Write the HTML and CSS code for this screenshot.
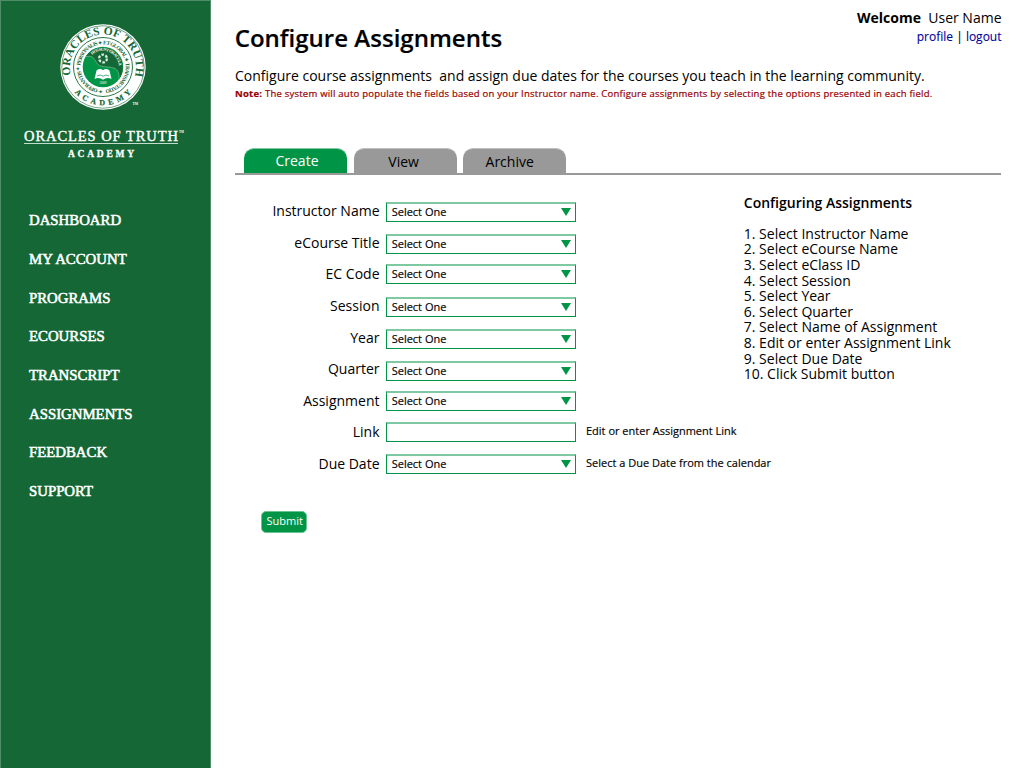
FILE: index.html
```
<!DOCTYPE html>
<html lang="en">
<head>
<meta charset="utf-8">
<title>Configure Assignments</title>
<link rel="stylesheet" href="styles.css">
</head>
<body>
<div class="app">
  <aside class="sidebar">
    <svg class="seal" width="92" height="92" viewBox="0 0 92 92">
      <defs>
        <path id="arc-name" d="M13.9 54.2A33 33 0 1 1 78.1 54.2"/>
        <path id="arc-academy" d="M17.600 71.400A38 38 0 0 0 75.400 70.500"/>
        <path id="arc-motto" d="M46 68.700A22.700 22.700 0 1 1 46.1 68.700"/>
        <path id="arc-inner" d="M35 33.800A16 16 0 0 1 61 50.500"/>
      </defs>
      <circle cx="46" cy="46" r="42.700" fill="#fff"/>
      <circle cx="46" cy="46" r="41.200" fill="none" stroke="#156735" stroke-width=".6"/>
      <circle cx="46" cy="46" r="29.500" fill="none" stroke="#156735" stroke-width=".9"/>
      <circle cx="46" cy="46" r="20.300" fill="#009447"/>
      <path d="M28.500 35.500A20.300 20.300 0 1 1 62 58.500C63 44 53 47 46 45.500C36 45 41 33 28.500 35.500Z" fill="#156735"/>
      <path d="M28.500 35.500C41 33 36 45 46 45.500C53 47 63 44 62 58.500" fill="none" stroke="#8ccba5" stroke-width=".6"/>
      <circle cx="46" cy="37.500" r="3.900" fill="none" stroke="#d9eee0" stroke-width="2.300" stroke-dasharray="2.600 1.480"/>
      <path d="M39.500 49.500Q43 46.800 46 49.200Q49 46.800 52.500 49.500L54.500 58Q50 55.800 46 58.800Q42 55.800 37.500 58Z" fill="#fff"/>
      <path d="M40 55Q43 53 46 55.200Q49 53 52 55" fill="none" stroke="#009447" stroke-width=".7"/>
      <text class="seal-name"><textPath href="#arc-name" textLength="120" lengthAdjust="spacing">ORACLES OF TRUTH</textPath></text>
      <text class="seal-academy"><textPath href="#arc-academy" textLength="64" lengthAdjust="spacing">ACADEMY</textPath></text>
      <text class="seal-motto"><textPath href="#arc-motto" textLength="140" lengthAdjust="spacing">✦ OPERANTIS ✦ PERSONALIS ✦ ET GLOBAL ✦ TRANSMUTATIO</textPath></text>
      <text class="seal-inner"><textPath href="#arc-inner" textLength="36" lengthAdjust="spacing">HOS SUNT ORACULA</textPath></text>
      <text class="seal-year" x="42.500" y="63">2009</text>
      <text class="seal-tm" x="75.500" y="84">TM</text>
    </svg>
    <svg class="wordmark" width="164" height="34" viewBox="0 0 164 34">
      <text class="wordmark-name" x="1" y="14.500" textLength="154" lengthAdjust="spacing">ORACLES OF TRUTH</text>
      <text class="wordmark-tm" x="156" y="7">TM</text>
      <path d="M1 17.500H155" stroke="#c4dccb" stroke-width="1"/>
      <text class="wordmark-sub" x="45" y="30.500" textLength="66" lengthAdjust="spacing">ACADEMY</text>
    </svg>
    <nav class="menu">
      <a>DASHBOARD</a>
      <a>MY ACCOUNT</a>
      <a>PROGRAMS</a>
      <a>ECOURSES</a>
      <a>TRANSCRIPT</a>
      <a>ASSIGNMENTS</a>
      <a>FEEDBACK</a>
      <a>SUPPORT</a>
    </nav>
  </aside>
  <main class="main">
    <header class="header">
      <h1 class="title">Configure Assignments</h1>
      <div class="user">
        <div class="welcome"><b>Welcome</b>&nbsp; User Name</div>
        <div class="links"><a>profile</a> | <a>logout</a></div>
      </div>
    </header>
    <p class="intro">Configure course assignments&nbsp; and assign due dates for the courses you teach in the learning community.</p>
    <p class="note"><b>Note:</b> The system will auto populate the fields based on your Instructor name. Configure assignments by selecting the options presented in each field.</p>
    <div class="tabs">
      <div class="tab tab-active">Create</div>
      <div class="tab">View</div>
      <div class="tab tab-archive">Archive</div>
    </div>
    <div class="content">
      <form class="form">
        <div class="row"><label>Instructor Name</label><div class="select">Select One<i></i></div></div>
        <div class="row gap-s"><label>eCourse Title</label><div class="select">Select One<i></i></div></div>
        <div class="row gap-l low"><label>EC Code</label><div class="select">Select One<i></i></div></div>
        <div class="row"><label>Session</label><div class="select">Select One<i></i></div></div>
        <div class="row"><label>Year</label><div class="select">Select One<i></i></div></div>
        <div class="row gap-s high"><label>Quarter</label><div class="select">Select One<i></i></div></div>
        <div class="row gap-m low"><label>Assignment</label><div class="select">Select One<i></i></div></div>
        <div class="row low"><label>Link</label><div class="select"></div><span class="hint">Edit or enter Assignment Link</span></div>
        <div class="row low"><label>Due Date</label><div class="select">Select One<i></i></div><span class="hint">Select a Due Date from the calendar</span></div>
        <div class="submit">Submit</div>
      </form>
      <section class="help">
        <h2>Configuring Assignments</h2>
        <div>1. Select Instructor Name</div>
        <div>2. Select eCourse Name</div>
        <div>3. Select eClass ID</div>
        <div>4. Select Session</div>
        <div>5. Select Year</div>
        <div>6. Select Quarter</div>
        <div>7. Select Name of Assignment</div>
        <div>8. Edit or enter Assignment Link</div>
        <div>9. Select Due Date</div>
        <div>10. Click Submit button</div>
      </section>
    </div>
  </main>
</div>
</body>
</html>
```
FILE: styles.css
```
* { box-sizing: border-box; }
body { margin: 0; background: #fff; color: #000; font-family: "Open Sans", sans-serif; font-size: 14px; }
.app { display: flex; width: 1024px; height: 768px; overflow: hidden; }
.sidebar { width: 211px; flex: none; background: #156735; border: 1px solid #4f8d68; border-bottom: 0; display: flex; flex-direction: column; }
.seal { margin: 20px 0 0 56px; display: block; overflow: visible; }
.seal text { font-family: "Liberation Serif", serif; fill: #156735; }
.seal .seal-name { font-size: 11.5px; font-weight: bold; }
.seal .seal-academy { font-size: 8px; font-weight: bold; stroke: #156735; stroke-width: .2px; }
.seal .seal-motto { font-size: 5.5px; font-weight: bold; }
.seal .seal-inner { font-size: 4.2px; font-weight: bold; fill: #fff; }
.seal .seal-year { font-size: 3.5px; fill: #fff; }
.seal .seal-tm { font-size: 3.5px; font-weight: bold; fill: #fff; }
.wordmark { margin: 13px 0 0 22px; display: block; overflow: visible; }
.wordmark text { font-family: "Liberation Serif", serif; fill: #fff; }
.wordmark .wordmark-name { font-size: 14.5px; stroke: #fff; stroke-width: .4px; }
.wordmark .wordmark-tm { font-size: 3px; font-weight: bold; }
.wordmark .wordmark-sub { font-size: 9.5px; font-weight: bold; stroke: #fff; stroke-width: .3px; }
.menu { display: flex; flex-direction: column; margin: 41.3px 0 0 28px; }
.menu a { height: 38.7px; line-height: 38.7px; font-family: "Liberation Serif", serif; font-size: 14.8px; color: #fff; -webkit-text-stroke: .55px #fff; white-space: nowrap; }
.main { flex: 1; padding: 0 23px 0 24px; display: flex; flex-direction: column; }
.header { height: 63px; display: flex; justify-content: space-between; }
.title { margin: 21px 0 0 -.3px; font-size: 24px; letter-spacing: .02px; line-height: 34px; font-weight: 600; white-space: nowrap; -webkit-text-stroke: .2px #000; }
.user { text-align: right; padding-top: 8px; margin-right: -.5px; }
.welcome { line-height: 20px; white-space: nowrap; }
.links { font-size: 12px; line-height: 18px; -webkit-text-stroke: .1px; }
.links a { color: #000099; }
.intro { margin: 3px 0 0; line-height: 20px; white-space: nowrap; }
.note { margin: 1px 0 0; font-size: 9.5px; letter-spacing: .232px; line-height: 14px; color: #990000; white-space: nowrap; -webkit-text-stroke: .2px #990000; }
.tabs { margin-top: 47px; height: 27px; padding-left: 9px; display: flex; gap: 6.600px; border-bottom: 2px solid #999; }
.tab { width: 103px; height: 25px; border-radius: 10px 10px 0 0; background: #999; border-top: 1px solid #c0c0c0; text-align: center; line-height: 26px; padding-right: 3px; }
.tab-archive { padding-right: 10px; }
.tab-active { background: #009447; color: #fff; border-top-color: #7fc9a2; line-height: 24px; padding-right: 0; padding-left: 3px; }
.content { display: flex; padding-top: 27px; }
.form { width: 508.800px; flex: none; }
.row { display: flex; height: 20px; margin-bottom: 12px; }
.gap-s { margin-bottom: 10px; }
.gap-m { margin-bottom: 11px; }
.gap-l { margin-bottom: 13px; }
.row label { width: 144.500px; flex: none; margin-right: 6.500px; text-align: right; line-height: 20px; margin-top: -1px; white-space: nowrap; }
.low label { margin-top: 0; }
.high label { margin-top: -2px; }
.select { width: 190px; height: 20px; flex: none; border: 1px solid #009447; border-top: 2px solid #7fc9a2; padding: 0 4px 0 4.700px; display: flex; align-items: flex-start; justify-content: space-between; font-size: 11px; line-height: 15px; -webkit-text-stroke: .15px #000; }
.select i { width: 10px; height: 8px; margin-top: 4px; background: #009447; clip-path: polygon(0 0, 100% 0, 50% 100%); }
.hint { margin-left: 10px; font-size: 11px; line-height: 18px; white-space: nowrap; -webkit-text-stroke: .15px #000; }
.submit { margin: 37px 0 0 26px; width: 45.500px; height: 22px; border-radius: 5px; border: 1px solid #6dc294; background: #009447; color: #fff; font-size: 11px; line-height: 18px; padding-left: 2px; text-align: center; white-space: nowrap; }
.help { line-height: 15.600px; white-space: nowrap; margin-top: -7.300px; }
.help h2 { margin: 0 0 15.600px; font-size: 14px; line-height: 15.600px; font-weight: 600; }
```
